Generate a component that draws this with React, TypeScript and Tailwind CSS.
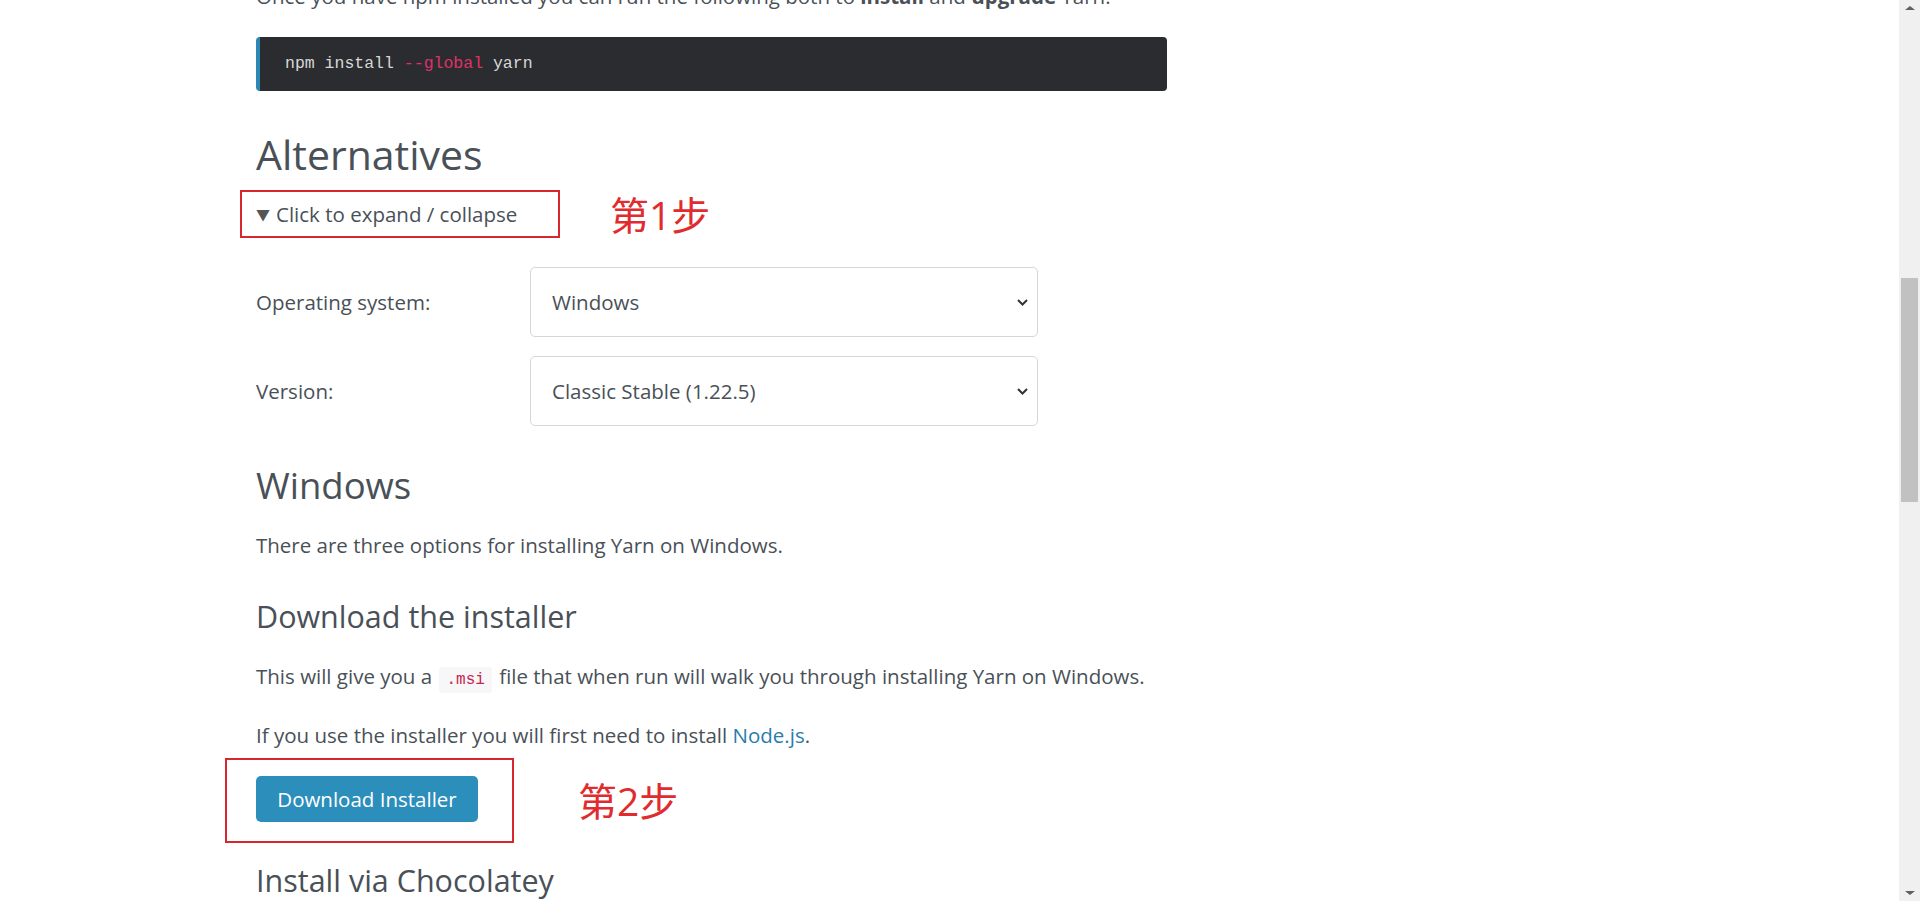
import React from "react";

const sans = { fontFamily: '"Open Sans", "Noto Sans CJK SC", sans-serif' };

function Chevron() {
  return (
    <svg width="11" height="7" viewBox="0 0 11 7" fill="none" aria-hidden="true">
      <path d="M1 1l4.5 4.5L10 1" stroke="#333" strokeWidth="2" />
    </svg>
  );
}

function SelectBox({ value }: { value: string }) {
  return (
    <div className="flex h-[70px] w-[508px] items-center justify-between rounded-[5px] border border-[#d6d6d6] bg-white pl-[21px] pr-[9px] text-[20.5px] text-[#495057]">
      <span>{value}</span>
      <Chevron />
    </div>
  );
}

function Scrollbar() {
  return (
    <div className="flex h-[901px] w-[21px] shrink-0 flex-col items-center bg-[#f0f0f0]">
      <div className="mt-[6px] h-0 w-0 border-x-[5px] border-b-[4px] border-x-transparent border-b-[#606060]" />
      <div className="mt-[268px] h-[224px] w-[17px] bg-[#c1c1c1]" />
      <div className="mt-auto mb-[6px] h-0 w-0 border-x-[5px] border-t-[4px] border-x-transparent border-t-[#606060]" />
    </div>
  );
}

export default function App() {
  return (
    <div className="flex h-[901px] w-[1920px] overflow-hidden bg-white" style={sans}>
      <main className="flex-1 pl-[256px] text-[#495057]">
        <div className="w-[911px]">
          <p className="-mt-[19px] whitespace-nowrap text-[20.5px] leading-[30px]">
            Once you have npm installed you can run the following both to <strong>install</strong> and{" "}
            <strong>upgrade</strong> Yarn.
          </p>

          <pre
            className="mt-[26px] flex h-[54px] items-center rounded-[4px] border-l-[4px] border-[#2b87b3] bg-[#2a2c30] pl-[25px] text-[16.5px] text-[#d8d8d8]"
            style={{ fontFamily: '"Liberation Mono", monospace' }}
          >
            npm install <span className="text-[#e0306a]">--global</span> yarn
          </pre>

          <h2 className="mt-[37px] text-[41px] leading-[52px] text-[#495057]">Alternatives</h2>

          <div className="mt-[10px] flex items-center">
            <div className="-ml-[16px] flex h-[48px] w-[320px] items-center border-2 border-[#d7262e] pl-[14px] text-[20.5px]">
              <span className="mr-[6px] text-[14px] text-[#555]">▼</span>
              Click to expand / collapse
            </div>
            <span className="ml-[50px] text-[39px] leading-none text-[#e02b2f]">第1步</span>
          </div>

          <div className="mt-[29px] flex flex-col gap-[19px]">
            <div className="flex items-center">
              <span className="w-[274px] text-[20.5px]">Operating system:</span>
              <SelectBox value="Windows" />
            </div>
            <div className="flex items-center">
              <span className="w-[274px] text-[20.5px]">Version:</span>
              <SelectBox value="Classic Stable (1.22.5)" />
            </div>
          </div>

          <h3 className="mt-[37px] text-[36.5px] leading-[44px]">Windows</h3>
          <p className="mt-[23px] text-[20.5px] leading-[30px]">There are three options for installing Yarn on Windows.</p>

          <h4 className="mt-[36px] text-[30.5px] leading-[40px]">Download the installer</h4>
          <p className="mt-[25px] whitespace-nowrap text-[20.5px] leading-[30px]">
            This will give you a{" "}
            <code
              className="mx-[2px] rounded-[3px] bg-[#f7f7f9] px-[7px] py-[4px] text-[16px] text-[#c7254e]"
              style={{ fontFamily: '"Liberation Mono", monospace' }}
            >
              .msi
            </code>{" "}
            file that when run will walk you through installing Yarn on Windows.
          </p>
          <p className="mt-[25px] text-[20.5px] leading-[30px]">
            If you use the installer you will first need to install{" "}
            <a className="text-[#2a7cab]">Node.js</a>.
          </p>

          <div className="mt-[8px] flex items-center">
            <div className="-ml-[31px] h-[85px] w-[289px] border-2 border-[#d7262e] pl-[29px] pt-[16px]">
              <button className="h-[46px] w-[222px] rounded-[5px] bg-[#2c8ebb] text-[20.5px] text-white">
                Download Installer
              </button>
            </div>
            <span className="ml-[64px] text-[39px] leading-none text-[#e02b2f]">第2步</span>
          </div>

          <h4 className="mt-[17px] text-[30.5px] leading-[40px]">Install via Chocolatey</h4>
        </div>
      </main>
      <Scrollbar />
    </div>
  );
}
